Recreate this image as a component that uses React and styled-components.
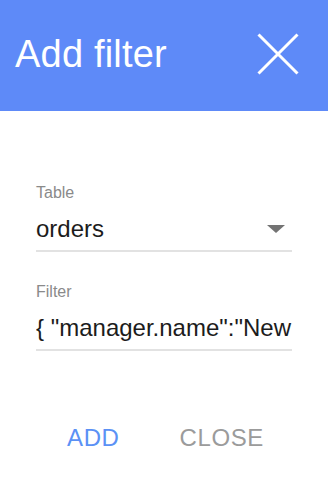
import React from "react";
import styled, { createGlobalStyle } from "styled-components";

const Global = createGlobalStyle`
  html, body { margin: 0; padding: 0; background: #ffffff; }
  body { font-family: "Liberation Sans", Arial, sans-serif; }
`;

const Dialog = styled.div`
  width: 328px;
  height: 494px;
  display: flex;
  flex-direction: column;
  background: #fff;
  overflow: hidden;
`;

const Header = styled.div`
  height: 111px;
  flex: none;
  background: #5e8af8;
  display: flex;
  align-items: center;
  justify-content: space-between;
  padding: 0 29px 3px 15px;
  box-sizing: border-box;
`;

const Title = styled.h1`
  margin: 0;
  font-size: 38px;
  line-height: 44px;
  font-weight: 400;
  color: #fff;
  letter-spacing: 0.2px;
`;

const CloseIcon = styled.button`
  border: 0;
  background: none;
  padding: 0;
  width: 42px;
  height: 42px;
  display: flex;
  align-items: center;
  justify-content: center;
  cursor: pointer;
`;

const Body = styled.div`
  padding: 72px 36px 0 36px;
  display: flex;
  flex-direction: column;
  gap: 30px;
`;

const Field = styled.div`
  display: flex;
  flex-direction: column;
  border-bottom: 2px solid #e2e2e2;
  padding-bottom: 6px;
`;

const Label = styled.label`
  font-size: 16px;
  color: #8a8a8a;
  line-height: 20px;
`;

const Row = styled.div`
  display: flex;
  align-items: center;
  justify-content: space-between;
  margin-top: 11px;
  height: 30px;
`;

const Value = styled.div`
  font-size: 24px;
  color: #1c1c1c;
  white-space: nowrap;
  overflow: hidden;
  line-height: 30px;
  flex: 1;
  min-width: 0;
`;

const Caret = styled.div`
  flex: none;
  width: 0;
  height: 0;
  border-left: 9px solid transparent;
  border-right: 9px solid transparent;
  border-top: 8px solid #737373;
  margin-right: 7px;
`;

const Actions = styled.div`
  margin-top: 73px;
  display: flex;
  justify-content: center;
  gap: 60px;
  padding-left: 3px;
`;

const ActionButton = styled.button`
  border: 0;
  background: none;
  padding: 0;
  font-family: "Liberation Sans", Arial, sans-serif;
  font-size: 24px;
  line-height: 28px;
  font-weight: 400;
  letter-spacing: 0.6px;
  cursor: pointer;
  color: ${(p) => (p.$primary ? "#5b91f5" : "#9b9b9b")};
`;

export default function App() {
  return (
    <>
      <Global />
      <Dialog>
        <Header>
          <Title>Add filter</Title>
          <CloseIcon aria-label="close">
            <svg width="42" height="42" viewBox="0 0 42 42">
              <path d="M1.5 1.5 L40.5 40.5 M40.5 1.5 L1.5 40.5" stroke="#fff" strokeWidth="3" />
            </svg>
          </CloseIcon>
        </Header>
        <Body>
          <Field>
            <Label>Table</Label>
            <Row>
              <Value>orders</Value>
              <Caret />
            </Row>
          </Field>
          <Field>
            <Label>Filter</Label>
            <Row>
              <Value>{'{ "manager.name":"New'}</Value>
            </Row>
          </Field>
        </Body>
        <Actions>
          <ActionButton $primary>ADD</ActionButton>
          <ActionButton>CLOSE</ActionButton>
        </Actions>
      </Dialog>
    </>
  );
}
